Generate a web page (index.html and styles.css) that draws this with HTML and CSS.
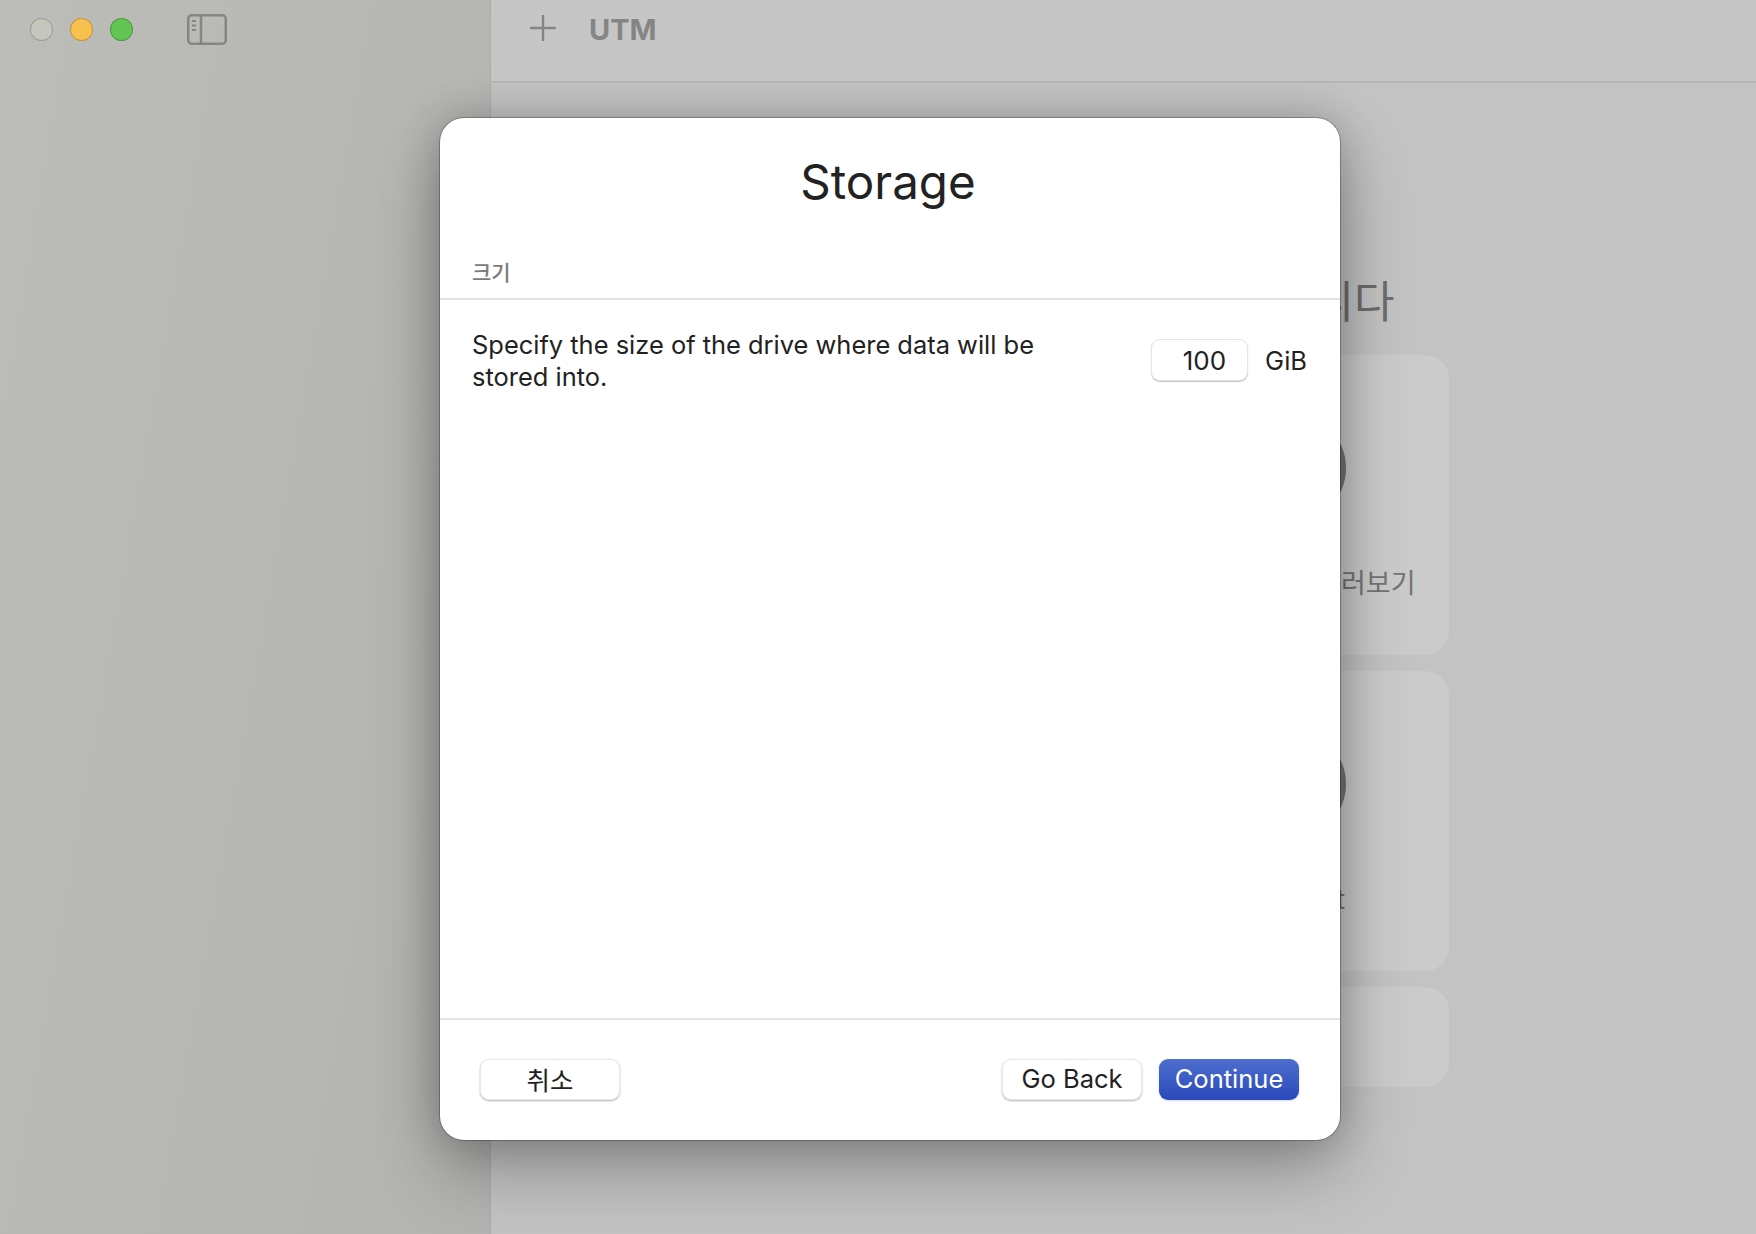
FILE: index.html
```html
<!DOCTYPE html>
<html lang="ko">
<head>
  <meta charset="UTF-8" />
  <title>UTM</title>
  <link rel="stylesheet" href="styles.css">
</head>
<body>
  <div class="app">
    <!-- Sidebar -->
    <aside class="sidebar">
      <div class="traffic">
        <span class="light light-close"></span>
        <span class="light light-min"></span>
        <span class="light light-max"></span>
      </div>
      <svg class="sidebar-icon" width="40" height="31" viewBox="0 0 40 31" fill="none" stroke="#858585">
        <rect x="1.25" y="1.25" width="37.5" height="28.5" rx="3.5" stroke-width="2.5" />
        <path d="M14 1.5V29.5" stroke-width="2.5" />
        <path d="M5 7H9M5 11.5H9M5 16H9" stroke-width="1.8" />
      </svg>
    </aside>

    <!-- Janela principal -->
    <main class="main">
      <header class="toolbar">
        <svg class="plus" width="26" height="26" viewBox="0 0 26 26" stroke="#858585" stroke-width="2.4" stroke-linecap="round">
          <path d="M13 1V25M1 13H25" />
        </svg>
        <span class="toolbar-title">UTM</span>
      </header>
      <section class="welcome">
        <h1>UTM에 오신 것을 환영합니다</h1>
        <div class="cards">
          <div class="card">
            <span class="card-circle"></span>
            <span class="card-label">새 가상 머신 만들기</span>
          </div>
          <div class="card">
            <span class="card-circle"></span>
            <span class="card-label">UTM 갤러리 둘러보기</span>
          </div>
          <div class="card">
            <span class="card-circle"></span>
            <span class="card-label">User Guide</span>
          </div>
          <div class="card">
            <span class="card-circle"></span>
            <span class="card-label card-label-support">Support</span>
          </div>
          <div class="card card-wide"></div>
        </div>
      </section>
    </main>
  </div>

  <!-- Folha do assistente -->
  <div class="sheet">
    <h2 class="sheet-title">Storage</h2>
    <div class="section-label">크기</div>
    <div class="sheet-body">
      <p class="size-text">Specify the size of the drive where data will be stored into.</p>
      <div class="size-field">
        <input class="size-input" type="text" value="100" />
        <span class="size-unit">GiB</span>
      </div>
    </div>
    <footer class="sheet-footer">
      <button class="btn" type="button">취소</button>
      <div class="footer-right">
        <button class="btn" type="button">Go Back</button>
        <button class="btn btn-primary" type="button">Continue</button>
      </div>
    </footer>
  </div>
</body>
</html>
```

FILE: styles.css
```css
* {
  margin: 0;
  padding: 0;
  box-sizing: border-box;
}
body {
  width: 1756px;
  height: 1234px;
  overflow: hidden;
  font-family: Inter, "Noto Sans CJK KR", sans-serif;
  background: #c3c3c3;
}
.app {
  display: flex;
  height: 100%;
}

/* Sidebar */
.sidebar {
  width: 491px;
  flex-shrink: 0;
  display: flex;
  align-items: flex-start;
  padding: 14px 0 0 30px;
  background: linear-gradient(100deg, #bcbdb8 0%, #b8b9b5 45%, #b3b3b1 100%);
  border-right: 1px solid #ababab;
}
.traffic {
  display: flex;
  gap: 17px;
  margin-top: 4px;
}
.light {
  width: 23px;
  height: 23px;
  border-radius: 50%;
  border: 1px solid rgb(0 0 0 / 0.2);
}
.light-close { background: #c6c7bc; }
.light-min { background: #f8c04e; }
.light-max { background: #62c554; }
.sidebar-icon {
  margin-left: 54px;
}

/* Janela principal */
.main {
  flex: 1;
  display: flex;
  flex-direction: column;
}
.toolbar {
  height: 83px;
  flex-shrink: 0;
  display: flex;
  align-items: flex-start;
  padding: 15px 0 0 39px;
  background: #c6c6c6;
  border-bottom: 2px solid #b6b6b6;
}
.toolbar-title {
  margin-left: 33px;
  margin-top: -3px;
  font-size: 29px;
  line-height: 35px;
  font-weight: 700;
  color: #858585;
}
.welcome {
  width: 652px;
  margin-left: 306px;
}
.welcome h1 {
  margin-top: 194px;
  text-align: center;
  white-space: nowrap;
  font-size: 44px;
  line-height: 50px;
  font-weight: 400;
  color: #6c6c6c;
}
.cards {
  display: grid;
  grid-template-columns: 1fr 1fr;
  grid-auto-rows: 300px;
  gap: 16px;
  margin-top: 28px;
}
.card {
  display: flex;
  flex-direction: column;
  align-items: center;
  padding-top: 57px;
  border-radius: 24px;
  background: #cbcbcb;
}
.card-wide {
  grid-column: 1 / 3;
  height: 100px;
}
.card-circle {
  width: 112px;
  height: 112px;
  border-radius: 50%;
  background: #747474;
}
.card-label {
  margin-top: 44px;
  font-size: 27px;
  line-height: 32px;
  white-space: nowrap;
  color: #747474;
}
.card-label-support {
  padding-left: 8px;
}

/* Folha */
.sheet {
  position: absolute;
  left: 440px;
  top: 118px;
  width: 900px;
  height: 1022px;
  display: flex;
  flex-direction: column;
  background: #fff;
  border-radius: 24px;
  box-shadow: 0 0 0 1px rgb(0 0 0 / 0.25), 0 30px 70px rgb(0 0 0 / 0.28), 0 0 40px rgb(0 0 0 / 0.2);
}
.sheet-title {
  margin-top: 34px;
  padding-right: 4px;
  text-align: center;
  font-size: 47.5px;
  line-height: 60px;
  font-weight: 400;
  color: #222;
}
.section-label {
  margin-top: 47px;
  padding: 0 0 12px 32px;
  font-size: 21px;
  line-height: 27px;
  font-weight: 500;
  color: #7b7b7b;
  border-bottom: 2px solid #e3e3e3;
}
.sheet-body {
  flex: 1;
  display: flex;
  align-items: flex-start;
  justify-content: space-between;
  padding: 29px 33px 0 32px;
}
.size-text {
  width: 620px;
  font-size: 25.45px;
  line-height: 32px;
  color: #222;
}
.size-field {
  display: flex;
  align-items: center;
  gap: 17px;
  margin-top: 10px;
}
.size-input {
  width: 97px;
  height: 42px;
  padding-right: 21px;
  text-align: right;
  font-family: inherit;
  font-size: 26px;
  color: #222;
  background: #fff;
  border: 1px solid #e6e6e6;
  border-radius: 9px;
  box-shadow: 0 1px 1px rgb(0 0 0 / 0.25);
  outline: none;
}
.size-unit {
  font-size: 25.5px;
  color: #222;
}
.sheet-footer {
  height: 122px;
  flex-shrink: 0;
  display: flex;
  justify-content: space-between;
  align-items: flex-start;
  padding: 39px 41px 0 40px;
  border-top: 2px solid #e5e5e5;
}
.footer-right {
  display: flex;
  gap: 17px;
}
.btn {
  width: 140px;
  height: 41px;
  padding-bottom: 2px;
  font-family: inherit;
  font-size: 25.5px;
  color: #222;
  background: #fff;
  border: 1px solid #e8e8e8;
  border-radius: 9px;
  box-shadow: 0 1px 2px rgb(0 0 0 / 0.3);
}
.btn-primary {
  color: #fff;
  background: linear-gradient(#4d6ecd, #2a4abc);
  border: none;
  box-shadow: 0 1px 2px rgb(42 74 188 / 0.2);
}
```
